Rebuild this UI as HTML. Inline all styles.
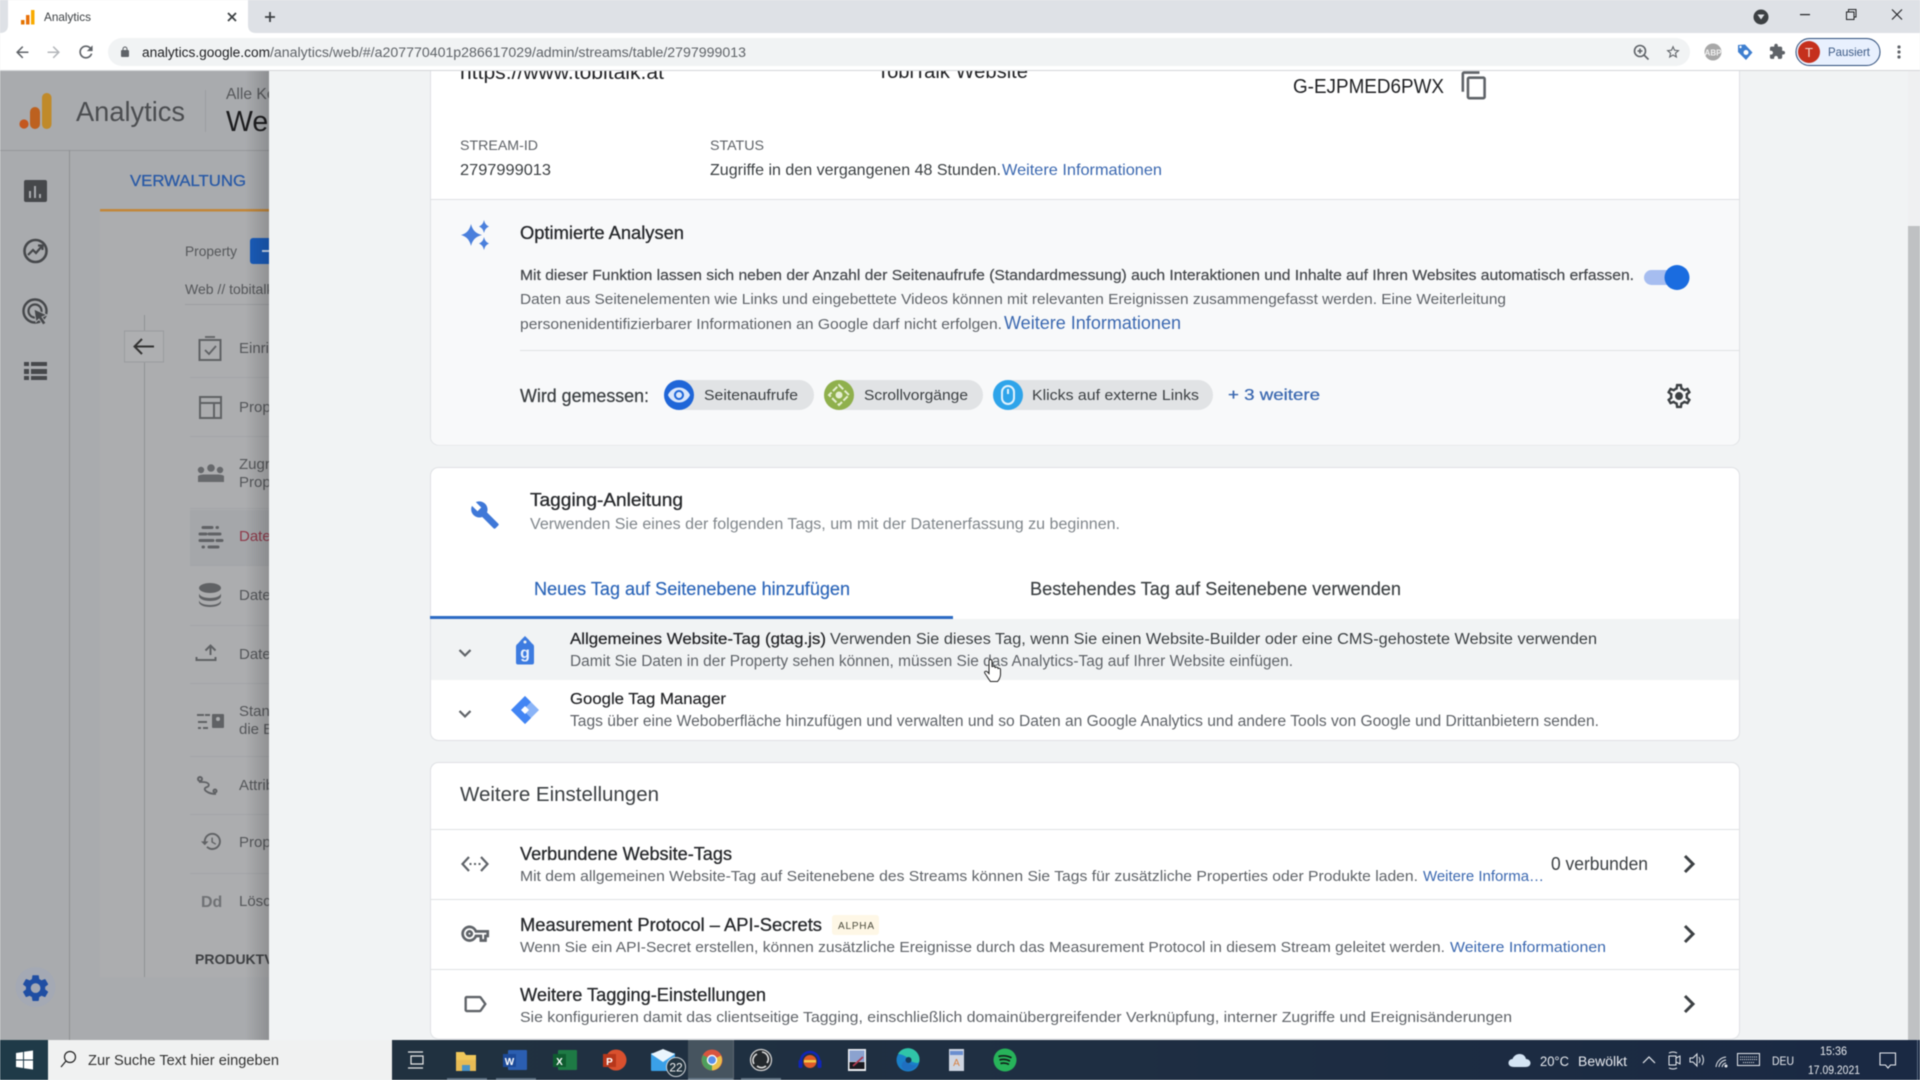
<!DOCTYPE html>
<html lang="de"><head><meta charset="utf-8"><title>Analytics</title>
<style>
html,body{margin:0;padding:0;width:1920px;height:1080px;overflow:hidden;background:#f1f3f4}
svg{display:block;filter:blur(.45px)}
text{font-family:"Liberation Sans",Arial,sans-serif;white-space:pre}
.t{fill:#202124}.g{fill:#5f6368}.b{fill:#3b68b0}
.m{fill:#26282b;stroke:#26282b;stroke-width:.28}
.l{fill:#55575a}
</style></head><body>
<svg width="1920" height="1080" viewBox="0 0 1920 1080" xmlns="http://www.w3.org/2000/svg">
<defs>
<linearGradient id="sh" x1="0" x2="1" y1="0" y2="0"><stop offset="0" stop-color="#000" stop-opacity="0"/><stop offset="1" stop-color="#000" stop-opacity=".16"/></linearGradient>
<linearGradient id="tb" x1="0" x2="1" y1="0" y2="0"><stop offset="0" stop-color="#22333f"/><stop offset=".5" stop-color="#1f2f42"/><stop offset="1" stop-color="#1a2943"/></linearGradient>
<path id="gear" d="M19.14 12.94c.04-.3.06-.61.06-.94 0-.32-.02-.64-.07-.94l2.03-1.58c.18-.14.23-.41.12-.61l-1.92-3.32c-.12-.22-.37-.29-.59-.22l-2.39.96c-.5-.38-1.03-.7-1.62-.94l-.36-2.54c-.04-.24-.24-.41-.48-.41h-3.84c-.24 0-.43.17-.47.41l-.36 2.54c-.59.24-1.13.57-1.62.94l-2.39-.96c-.22-.08-.47 0-.59.22L2.74 8.87c-.12.21-.08.47.12.61l2.03 1.58c-.05.3-.09.63-.09.94s.02.64.07.94l-2.03 1.58c-.18.14-.23.41-.12.61l1.92 3.32c.12.22.37.29.59.22l2.39-.96c.5.38 1.03.7 1.62.94l.36 2.54c.05.24.24.41.48.41h3.84c.24 0 .44-.17.47-.41l.36-2.54c.59-.24 1.13-.56 1.62-.94l2.39.96c.22.08.47 0 .59-.22l1.92-3.32c.12-.22.07-.47-.12-.61l-2.01-1.58zM12 15.6c-1.98 0-3.6-1.62-3.6-3.6s1.62-3.6 3.6-3.6 3.6 1.62 3.6 3.6-1.62 3.6-3.6 3.6z"/>
</defs>

<!-- left scrimmed page -->
<rect x="0" y="70" width="300" height="970" fill="#a9abae"/>
<rect x="100" y="212" width="200" height="765" fill="#acadaf"/>
<rect x="0" y="150" width="300" height="1" fill="#96989b"/>
<rect x="69" y="150" width="1" height="890" fill="#8f9194"/>
<rect x="205" y="90" width="1" height="42" fill="#9c9ea1"/>
<!-- GA logo -->
<circle cx="24" cy="124" r="4.600" fill="#c4581f"/>
<rect x="30" y="107" width="10" height="22" rx="5" fill="#bd611f"/>
<rect x="42" y="93" width="9.500" height="36" rx="4.700" fill="#c08a2a"/>
<text x="76" y="121" font-size="28" fill="#4b4d50" textLength="109" lengthAdjust="spacingAndGlyphs">Analytics</text>
<text x="226" y="99" font-size="16" fill="#55575a" textLength="80" lengthAdjust="spacingAndGlyphs">Alle Konten</text>
<text x="226" y="131" font-size="29" fill="#1c1c1e" textLength="58" lengthAdjust="spacingAndGlyphs">Web</text>
<!-- rail icons -->
<rect x="24" y="180" width="23" height="22" rx="2" fill="#46484b"/>
<rect x="29" y="191" width="2" height="7" fill="#a9abae"/><rect x="34" y="186" width="2" height="12" fill="#a9abae"/><rect x="39" y="194" width="2" height="4" fill="#a9abae"/>
<circle cx="35.500" cy="251" r="11" fill="none" stroke="#46484b" stroke-width="2.600"/>
<path d="M28 255l5-5 3 3 6-7M38 245.500h4.500v4.500" fill="none" stroke="#46484b" stroke-width="2.200"/>
<circle cx="35" cy="311" r="11.500" fill="none" stroke="#46484b" stroke-width="2.400"/>
<circle cx="35" cy="311" r="6.500" fill="none" stroke="#46484b" stroke-width="2.200"/>
<path d="M34 309l13 6-5 2 4 6-3 2-4-6-3 3z" fill="#46484b" stroke="#a9abae"/>
<path d="M24 362h5v4h-5zM31 362h16v4H31zM24 369h5v5h-5zM31 369h16v5H31zM24 376h5v4h-5zM31 376h16v4H31z" fill="#46484b"/>
<circle cx="35.500" cy="987" r="20" fill="#a4a9b4"/>
<use href="#gear" transform="translate(19.500 972) scale(1.340)" fill="#1f4ea3"/>
<!-- verwaltung -->
<text x="130" y="186" font-size="16" fill="#2a5aa6" stroke="#2a5aa6" stroke-width=".3" textLength="116" lengthAdjust="spacingAndGlyphs">VERWALTUNG</text>
<rect x="100" y="209" width="170" height="2.500" fill="#c2873a"/>
<text x="185" y="256" font-size="14" fill="#55575a" textLength="52" lengthAdjust="spacingAndGlyphs">Property</text>
<rect x="250" y="238" width="30" height="26" rx="3" fill="#1a5cba"/>
<rect x="262" y="250" width="8" height="2" fill="#c8d8f0"/>
<text x="185" y="294" font-size="14" fill="#55575a">Web // tobitalk</text>
<rect x="185" y="304" width="90" height="1" fill="#9c9ea1"/>
<!-- back box + line -->
<rect x="144" y="315" width="1" height="662" fill="#8f9194"/>
<rect x="124.500" y="331" width="39" height="31" fill="#aeafb1" stroke="#9a9c9f"/>
<path d="M154 346.500h-19M142 339l-7.500 7.500 7.500 7.500" fill="none" stroke="#333" stroke-width="2"/>
<!-- nav rows -->
<rect x="190" y="510" width="90" height="55" fill="#a5a7aa"/>
<g fill="none" stroke="#606265" stroke-width="2">
<rect x="199.500" y="340" width="21" height="20" />
<path d="M205 337h10M205 350l4 4 7-8" stroke-width="1.800"/>
<rect x="200" y="397" width="21" height="21" /><path d="M200 403h21M214 403v15"/>
<path d="M215 654v-9m-5 4.500 5-5 5 5M201 656v3h19v-3" transform="translate(-4.500 1)" />
<path d="M199 782h3c8 0 8 4 5 5-6 2 1 7 9 7" stroke-width="1.800"/><circle cx="200" cy="779" r="2"/><circle cx="215" cy="791" r="1.500"/>
</g>
<circle cx="201" cy="470" r="3.200" fill="#67696c"/><circle cx="211" cy="468" r="3.800" fill="#67696c"/><circle cx="220" cy="470" r="3.200" fill="#67696c"/>
<path d="M198 476c2-1.500 5-1.500 7-1.500h12c2 0 5 0 7 1.500v6h-26z" fill="#67696c"/>
<g stroke="#606265" stroke-width="3" stroke-linecap="round"><path d="M203 527.500h9M217 527.500h.5M200 534h6M209 534h11M200 540.500h13M217 540.500h5M203 547h.5M209 547h9"/></g>
<ellipse cx="210" cy="588" rx="11" ry="5" fill="#606265"/>
<path d="M199 593c0 3 5 5 11 5s11-2 11-5v3c0 3-5 5-11 5s-11-2-11-5zM199 600c0 3 5 5 11 5s11-2 11-5v2c0 3-5 5-11 5s-11-2-11-5z" fill="#606265"/>
<path d="M197 714h7v2h-7zM205 714h5v2h-5zM198 721h9v2h-9zM198 727h3v2h-3zM203 727h5v2h-5z" fill="#606265"/><rect x="212" y="714" width="12" height="14" rx="1" fill="#606265"/><circle cx="218" cy="719" r="2" fill="#acadaf"/>
<path d="M13 3c-4.970 0-9 4.030-9 9H1l3.890 3.890.07.14L9 12H6c0-3.870 3.130-7 7-7s7 3.130 7 7-3.130 7-7 7c-1.930 0-3.680-.79-4.940-2.060l-1.420 1.420C8.270 19.990 10.510 21 13 21c4.970 0 9-4.030 9-9s-4.030-9-9-9zm-1 5v5l4.280 2.540.72-1.210-3.500-2.080V8H12z" transform="translate(200 830) scale(.95)" fill="#606265"/>
<text x="201" y="907" font-size="16" font-weight="bold" fill="#707275">Dd</text>
<g font-size="15" fill="#55575a">
<text x="239" y="353">Einrichtung</text>
<text x="239" y="412">Property</text>
<text x="239" y="469">Zugriffe</text>
<text x="239" y="487">Property</text>
<text x="239" y="541" fill="#8f3a4a">Datenstreams</text>
<text x="239" y="600">Datenansicht</text>
<text x="239" y="659">Datenimport</text>
<text x="239" y="716">Standard</text>
<text x="239" y="734">die Berichte</text>
<text x="239" y="790">Attribution</text>
<text x="239" y="847">Property</text>
<text x="239" y="906">Löschen</text>
</g>
<text x="195" y="964" font-size="14" font-weight="bold" fill="#3e4043">PRODUKTVERKNÜPFUNG</text>
<g fill="#a3a5a8">
<rect x="190" y="377" width="90" height="1"/><rect x="190" y="436" width="90" height="1"/><rect x="190" y="508" width="90" height="1"/><rect x="190" y="565" width="90" height="1"/><rect x="190" y="625" width="90" height="1"/><rect x="190" y="683" width="90" height="1"/><rect x="190" y="756" width="90" height="1"/><rect x="190" y="814" width="90" height="1"/><rect x="190" y="873" width="90" height="1"/>
</g>
<rect x="245" y="70" width="24" height="970" fill="url(#sh)"/>

<!-- drawer -->
<rect x="269" y="70" width="1651" height="970" fill="#f1f3f4"/>

<!-- card 1 -->
<path d="M430.500 60H1739.500V437a8 8 0 0 1-8 8H438.500a8 8 0 0 1-8-8z" fill="#fff" stroke="#dfe1e4"/>
<path d="M431 200H1739V437a8 8 0 0 1-8 8H439a8 8 0 0 1-8-8z" fill="#f8f9fa"/>
<rect x="431" y="199" width="1308" height="1" fill="#dfe1e4"/>
<text x="460" y="79" font-size="20" fill="#202124" textLength="204" lengthAdjust="spacingAndGlyphs">https://www.tobitalk.at</text>
<text x="877" y="78" font-size="20" fill="#202124" textLength="151" lengthAdjust="spacingAndGlyphs">TobiTalk Website</text>
<text x="1293" y="93" font-size="20" class="t" textLength="151" lengthAdjust="spacingAndGlyphs">G-EJPMED6PWX</text>
<path d="M16 1H4c-1.100 0-2 .9-2 2v14h2V3h12V1zm3 4H8c-1.100 0-2 .9-2 2v14c0 1.100.9 2 2 2h11c1.100 0 2-.9 2-2V7c0-1.100-.9-2-2-2zm0 16H8V7h11v14z" transform="translate(1459 70) scale(1.280)" fill="#5f6368"/>
<text x="460" y="150" font-size="14" class="g" textLength="78" lengthAdjust="spacingAndGlyphs">STREAM-ID</text>
<text x="460" y="175" font-size="16" fill="#3c4043" textLength="91" lengthAdjust="spacingAndGlyphs">2797999013</text>
<text x="710" y="150" font-size="14" class="g" textLength="54" lengthAdjust="spacingAndGlyphs">STATUS</text>
<text x="710" y="175" font-size="16" fill="#3c4043" textLength="291" lengthAdjust="spacingAndGlyphs">Zugriffe in den vergangenen 48 Stunden.</text>
<text x="1002" y="175" font-size="16" class="b" textLength="160" lengthAdjust="spacingAndGlyphs">Weitere Informationen</text>

<!-- optimized -->
<path d="M471 224Q473 233 482 235Q473 237 471 246Q469 237 461 235Q469 233 471 224zM484 220Q485 225 489 226.500Q485 228 484 233Q483 228 479 226.500Q483 225 484 220zM484 237Q485 242 489 243.500Q485 245 484 250Q483 245 479 243.500Q483 242 484 237z" fill="#4a7fdc"/>
<text x="520" y="239" font-size="18" class="m" textLength="164" lengthAdjust="spacingAndGlyphs">Optimierte Analysen</text>
<text x="520" y="280" font-size="15" fill="#46494d" stroke="#46494d" stroke-width=".22" textLength="1114" lengthAdjust="spacingAndGlyphs">Mit dieser Funktion lassen sich neben der Anzahl der Seitenaufrufe (Standardmessung) auch Interaktionen und Inhalte auf Ihren Websites automatisch erfassen.</text>
<text x="520" y="304" font-size="15" class="g" textLength="986" lengthAdjust="spacingAndGlyphs">Daten aus Seitenelementen wie Links und eingebettete Videos können mit relevanten Ereignissen zusammengefasst werden. Eine Weiterleitung</text>
<text x="520" y="329" font-size="15" class="g" textLength="482" lengthAdjust="spacingAndGlyphs">personenidentifizierbarer Informationen an Google darf nicht erfolgen.</text>
<text x="1004" y="329" font-size="18" class="b" textLength="177" lengthAdjust="spacingAndGlyphs">Weitere Informationen</text>
<rect x="1644" y="270" width="40" height="15" rx="7.500" fill="#a6bdf0"/>
<circle cx="1677" cy="277.500" r="12.500" fill="#1a6ce0"/>
<rect x="520" y="350" width="1219" height="1" fill="#e0e2e4"/>
<text x="520" y="402" font-size="18" fill="#3c4043" stroke="#3c4043" stroke-width=".25" textLength="129" lengthAdjust="spacingAndGlyphs">Wird gemessen:</text>
<rect x="664" y="380" width="150" height="30" rx="15" fill="#e1e3e5"/>
<circle cx="679" cy="395" r="15" fill="#1f66d8"/>
<path d="M12 4.500C7 4.500 2.730 7.610 1 12c1.730 4.390 6 7.500 11 7.500s9.270-3.110 11-7.500c-1.730-4.390-6-7.500-11-7.500zM12 17c-2.760 0-5-2.240-5-5s2.240-5 5-5 5 2.240 5 5-2.240 5-5 5zm0-8c-1.660 0-3 1.340-3 3s1.340 3 3 3 3-1.340 3-3-1.340-3-3-3z" transform="translate(667 383)" fill="#dbe7fb"/>
<text x="704" y="400" font-size="14.500" fill="#3c4043" textLength="94" lengthAdjust="spacingAndGlyphs">Seitenaufrufe</text>
<rect x="824" y="380" width="159" height="30" rx="15" fill="#e1e3e5"/>
<circle cx="839" cy="395" r="15" fill="#8fb04c"/>
<path d="M839 385l10 10-10 10-10-10z" fill="none" stroke="#e6efd2" stroke-width="2" stroke-dasharray="6 2"/><circle cx="839" cy="395" r="3.500" fill="#e6efd2"/>
<text x="864" y="400" font-size="14.500" fill="#3c4043" textLength="104" lengthAdjust="spacingAndGlyphs">Scrollvorgänge</text>
<rect x="993" y="380" width="220" height="30" rx="15" fill="#e1e3e5"/>
<circle cx="1008" cy="395" r="15" fill="#2ea4ea"/>
<rect x="1002" y="386" width="12" height="18" rx="6" fill="none" stroke="#e2f3fd" stroke-width="2"/><path d="M1008 389v5" stroke="#e2f3fd" stroke-width="2"/>
<text x="1032" y="400" font-size="14.500" fill="#3c4043" textLength="167" lengthAdjust="spacingAndGlyphs">Klicks auf externe Links</text>
<text x="1228" y="400" font-size="16" fill="#3b68b0" stroke="#3b68b0" stroke-width=".25" textLength="92" lengthAdjust="spacingAndGlyphs">+ 3 weitere</text>
<g transform="translate(1664.500 381.500) scale(1.210)" fill="#3c4043"><path d="M19.430 12.980c.04-.32.07-.64.07-.98 0-.34-.03-.66-.07-.98l2.110-1.650c.19-.15.24-.42.12-.64l-2-3.460c-.09-.16-.26-.25-.44-.25-.06 0-.12.01-.17.03l-2.490 1c-.52-.4-1.080-.73-1.690-.98l-.38-2.650C14.460 2.180 14.250 2 14 2h-4c-.25 0-.46.18-.49.42l-.38 2.650c-.61.25-1.170.59-1.690.98l-2.490-1c-.06-.02-.12-.03-.18-.03-.17 0-.34.09-.43.25l-2 3.460c-.13.22-.07.49.12.64l2.110 1.650c-.04.32-.07.65-.07.98 0 .33.03.66.07.98l-2.110 1.650c-.19.15-.24.42-.12.64l2 3.460c.09.16.26.25.44.25.06 0 .12-.01.17-.03l2.490-1c.52.4 1.080.73 1.690.98l.38 2.650c.03.24.24.42.49.42h4c.25 0 .46-.18.49-.42l.38-2.650c.61-.25 1.170-.59 1.690-.98l2.490 1c.06.02.12.03.18.03.17 0 .34-.09.43-.25l2-3.460c.12-.22.07-.49-.12-.64l-2.110-1.650zm-1.980-1.710c.04.31.05.52.05.73 0 .21-.02.43-.05.73l-.14 1.130.89.7 1.080.84-.7 1.210-1.270-.51-1.040-.42-.9.68c-.43.32-.84.56-1.250.73l-1.060.43-.16 1.130-.2 1.350h-1.400l-.19-1.350-.16-1.130-1.060-.43c-.43-.18-.83-.41-1.230-.71l-.91-.7-1.060.43-1.270.51-.7-1.210 1.080-.84.89-.7-.14-1.130c-.03-.31-.05-.54-.05-.74s.02-.43.05-.73l.14-1.130-.89-.7-1.080-.84.7-1.210 1.270.51 1.040.42.9-.68c.43-.32.84-.56 1.250-.73l1.060-.43.16-1.130.2-1.350h1.390l.19 1.350.16 1.130 1.060.43c.43.18.83.41 1.230.71l.91.7 1.060-.43 1.270-.51.7 1.210-1.070.85-.89.7.14 1.130z"/><circle cx="12" cy="12" r="3.300"/></g>

<!-- tagging card -->
<rect x="430.500" y="467.500" width="1309" height="273" rx="8" fill="#fff" stroke="#dfe1e4"/>
<path d="M22.700 19l-9.100-9.100c.9-2.300.4-5-1.500-6.900-2-2-5-2.400-7.400-1.300L9 6 6 9 1.600 4.700C.4 7.100.9 10.100 2.900 12.100c1.900 1.900 4.600 2.400 6.900 1.500l9.100 9.100c.4.4 1 .4 1.400 0l2.300-2.300c.5-.4.5-1.100.1-1.400z" transform="translate(470 500) scale(1.250)" fill="#3f78d8"/>
<text x="530" y="506" font-size="18" class="m" textLength="153" lengthAdjust="spacingAndGlyphs">Tagging-Anleitung</text>
<text x="530" y="529" font-size="15.500" fill="#80868b" textLength="590" lengthAdjust="spacingAndGlyphs">Verwenden Sie eines der folgenden Tags, um mit der Datenerfassung zu beginnen.</text>
<text x="534" y="595" font-size="18" fill="#2d66b9" stroke="#2d66b9" stroke-width=".2" textLength="316" lengthAdjust="spacingAndGlyphs">Neues Tag auf Seitenebene hinzufügen</text>
<text x="1030" y="595" font-size="18" fill="#3c4043" stroke="#3c4043" stroke-width=".15" textLength="371" lengthAdjust="spacingAndGlyphs">Bestehendes Tag auf Seitenebene verwenden</text>
<rect x="431" y="619" width="1308" height="61" fill="#f1f3f4"/>
<rect x="430" y="616" width="523" height="3" fill="#2d6bc4"/>
<path d="M459.500 650l5.500 5.500 5.500-5.500M459.500 711l5.500 5.500 5.500-5.500" fill="none" stroke="#5f6368" stroke-width="2.200"/>
<path d="M525 636l3.500 3.500 3.500 4c1.500 1 2 2 2 3v16a2 2 0 0 1-2 2h-14a2 2 0 0 1-2-2v-16c0-1 .5-2 2-3l3.500-4z" fill="#3d7be0"/>
<circle cx="525" cy="642" r="1.500" fill="#f1f3f4"/>
<text x="525" y="658" font-size="16" font-weight="bold" fill="#e8f0fd" text-anchor="middle">g</text>
<path d="M525 696l14 14-14 14-14-14z" fill="#8ab4f8"/>
<path d="M511 710l14-14 6 6-8 8 8 8-6 6z" fill="#4285f4"/>
<path d="M521 710l4-4 4 4-4 4z" fill="#fff"/>
<text x="570" y="644" font-size="15.500" class="t" stroke="#202124" stroke-width=".2" textLength="256" lengthAdjust="spacingAndGlyphs">Allgemeines Website-Tag (gtag.js)</text>
<text x="830" y="644" font-size="15.500" fill="#3c4043" textLength="767" lengthAdjust="spacingAndGlyphs">Verwenden Sie dieses Tag, wenn Sie einen Website-Builder oder eine CMS-gehostete Website verwenden</text>
<text x="570" y="666" font-size="15.500" class="g" textLength="723" lengthAdjust="spacingAndGlyphs">Damit Sie Daten in der Property sehen können, müssen Sie das Analytics-Tag auf Ihrer Website einfügen.</text>
<text x="570" y="704" font-size="15.500" class="t" stroke="#202124" stroke-width=".15" textLength="156" lengthAdjust="spacingAndGlyphs">Google Tag Manager</text>
<text x="570" y="726" font-size="15.500" class="g" textLength="1029" lengthAdjust="spacingAndGlyphs">Tags über eine Weboberfläche hinzufügen und verwalten und so Daten an Google Analytics und andere Tools von Google und Drittanbietern senden.</text>
<!-- cursor -->
<path d="M989 661c0-2 3-2 3 0v6c0-1 3-1 3 0v1c0-1 3-1 3 0v1c0-1 2.500-1 2.500.5v5c0 3-2 6-3 7h-7c-1-1-4-6-5.500-8s1-3 2.500-1.500l1.500 1.500z" fill="#fff" stroke="#222" stroke-width="1"/>

<!-- settings card -->
<path d="M430.500 770.500a8 8 0 0 1 8-8h1293a8 8 0 0 1 8 8V1031a8 8 0 0 1-8 8h-1293a8 8 0 0 1-8-8z" fill="#fff" stroke="#dfe1e4"/>
<text x="460" y="801" font-size="20" fill="#3c4043" textLength="199" lengthAdjust="spacingAndGlyphs">Weitere Einstellungen</text>
<rect x="431" y="829" width="1308" height="1" fill="#e0e2e4"/>
<rect x="431" y="899" width="1308" height="1" fill="#e0e2e4"/>
<rect x="431" y="969" width="1308" height="1" fill="#e0e2e4"/>
<path d="M469 857l-6.500 7 6.500 7M481 857l6.500 7-6.500 7" fill="none" stroke="#5f6368" stroke-width="2.200"/>
<path d="M469.500 864h2M474 864h2M478.500 864h2" stroke="#5f6368" stroke-width="2"/>
<path d="M22 19h-6v-4h-2.680c-1.140 2.420-3.600 4-6.320 4-3.860 0-7-3.140-7-7s3.140-7 7-7c2.720 0 5.170 1.580 6.320 4H24v6h-2v4zm-4-2h2v-4h2v-2H11.940l-.23-.67C11.010 8.340 9.110 7 7 7c-2.760 0-5 2.240-5 5s2.240 5 5 5c2.110 0 4.010-1.340 4.710-3.330l.23-.67H18v4zM7 15c-1.650 0-3-1.350-3-3s1.350-3 3-3 3 1.350 3 3-1.350 3-3 3zm0-4c-.55 0-1 .45-1 1s.45 1 1 1 1-.45 1-1-.45-1-1-1z" transform="translate(461.500 920) scale(1.140)" fill="#5f6368" stroke="#5f6368" stroke-width=".4"/>
<path d="M17.630 5.840C17.270 5.330 16.670 5 16 5L5 5.010C3.900 5.010 3 5.900 3 7v10c0 1.100.9 1.990 2 1.990L16 19c.67 0 1.270-.33 1.630-.84L22 12l-4.370-6.160zM16 17H5V7h11l3.550 5L16 17z" transform="translate(461 990) scale(1.170)" fill="#5f6368"/>
<text x="520" y="860" font-size="18" class="m" textLength="212" lengthAdjust="spacingAndGlyphs">Verbundene Website-Tags</text>
<text x="520" y="881" font-size="15" class="g" textLength="898" lengthAdjust="spacingAndGlyphs">Mit dem allgemeinen Website-Tag auf Seitenebene des Streams können Sie Tags für zusätzliche Properties oder Produkte laden.</text>
<text x="1423" y="881" font-size="15" class="b" textLength="121" lengthAdjust="spacingAndGlyphs">Weitere Informa…</text>
<text x="1551" y="870" font-size="18" fill="#3c4043" textLength="97" lengthAdjust="spacingAndGlyphs">0 verbunden</text>
<text x="520" y="931" font-size="18" class="m" textLength="302" lengthAdjust="spacingAndGlyphs">Measurement Protocol – API-Secrets</text>
<rect x="832" y="915" width="47" height="20" rx="3" fill="#fef7e6"/>
<text x="838" y="929" font-size="10" fill="#4a4a3c" textLength="36" lengthAdjust="spacing">ALPHA</text>
<text x="520" y="952" font-size="15" class="g" textLength="925" lengthAdjust="spacingAndGlyphs">Wenn Sie ein API-Secret erstellen, können zusätzliche Ereignisse durch das Measurement Protocol in diesem Stream geleitet werden.</text>
<text x="1450" y="952" font-size="15" class="b" textLength="156" lengthAdjust="spacingAndGlyphs">Weitere Informationen</text>
<text x="520" y="1001" font-size="18" class="m" textLength="246" lengthAdjust="spacingAndGlyphs">Weitere Tagging-Einstellungen</text>
<text x="520" y="1022" font-size="15" class="g" textLength="992" lengthAdjust="spacingAndGlyphs">Sie konfigurieren damit das clientseitige Tagging, einschließlich domainübergreifender Verknüpfung, interner Zugriffe und Ereignisänderungen</text>
<path d="M1685 856l8 8-8 8M1685 926l8 8-8 8M1685 996l8 8-8 8" fill="none" stroke="#3c4043" stroke-width="3"/>

<!-- scrollbar -->
<rect x="1908" y="70" width="12" height="970" fill="#eff0f1"/>
<rect x="1908" y="226" width="12" height="814" fill="#bfc1c3"/>

<!-- browser chrome -->
<rect x="0" y="0" width="1920" height="34" fill="#dee1e6"/>
<path d="M0 33q8 0 8-8V0h240v25q0 8 8 8z" fill="#fff"/>
<rect x="0" y="33" width="1920" height="37" fill="#fff"/>
<rect x="0" y="70" width="1920" height="1" fill="#d4d6d9"/>
<rect x="21" y="20" width="3.500" height="4.500" fill="#e37400"/>
<rect x="26" y="15" width="3.500" height="9.500" fill="#e8710a"/>
<rect x="31" y="10" width="3.500" height="14.500" fill="#f9ab00"/>
<text x="44" y="21" font-size="12" fill="#3c4043" textLength="47" lengthAdjust="spacingAndGlyphs">Analytics</text>
<path d="M228 13l8 8M236 13l-8 8" stroke="#3c4043" stroke-width="1.800"/>
<path d="M270 12v10M265 17h10" stroke="#3c4043" stroke-width="1.800"/>
<path d="M20 11H7.830l5.590-5.590L12 4l-8 8 8 8 1.410-1.410L7.830 13H20v-2z" transform="translate(13 43) scale(.77)" fill="#5f6368"/>
<path d="M4 11h12.170l-5.590-5.590L12 4l8 8-8 8-1.410-1.410L16.170 13H4v-2z" transform="translate(44.500 43) scale(.77)" fill="#b3b6ba"/>
<path d="M17.650 6.350C16.200 4.900 14.210 4 12 4c-4.420 0-7.990 3.580-7.990 8s3.570 8 7.990 8c3.730 0 6.840-2.550 7.730-6h-2.080c-.82 2.330-3.040 4-5.650 4-3.310 0-6-2.690-6-6s2.690-6 6-6c1.660 0 3.140.69 4.220 1.780L13 11h7V4l-2.350 2.350z" transform="translate(76 42) scale(.83)" fill="#5f6368"/>
<rect x="108" y="38" width="1582" height="28" rx="14" fill="#f1f3f4"/>
<path d="M18 8h-1V6c0-2.760-2.240-5-5-5S7 3.240 7 6v2H6c-1.100 0-2 .9-2 2v10c0 1.100.9 2 2 2h12c1.100 0 2-.9 2-2V10c0-1.100-.9-2-2-2zM9 6c0-1.660 1.340-3 3-3s3 1.340 3 3v2H9V6z" transform="translate(119 46) scale(.5)" fill="#5f6368"/>
<text x="142" y="57" font-size="13.500" fill="#202124" textLength="128" lengthAdjust="spacingAndGlyphs">analytics.google.com</text>
<text x="270" y="57" font-size="13.500" fill="#5f6368" textLength="476" lengthAdjust="spacingAndGlyphs">/analytics/web/#/a207770401p286617029/admin/streams/table/2797999013</text>
<circle cx="1640" cy="51" r="5.500" fill="none" stroke="#5f6368" stroke-width="1.600"/><path d="M1644 55l4.500 4.500M1637.500 51h5M1640 48.500v5" stroke="#5f6368" stroke-width="1.600"/>
<path d="M22 9.240l-7.190-.62L12 2 9.190 8.630 2 9.240l5.460 4.730L5.820 21 12 17.270 18.180 21l-1.630-7.030L22 9.240zM12 15.400l-3.760 2.270 1-4.280-3.320-2.880 4.380-.38L12 6.100l1.710 4.040 4.380.38-3.320 2.880 1 4.280L12 15.400z" transform="translate(1665 44) scale(.67)" fill="#5f6368"/>
<circle cx="1713" cy="52" r="8.500" fill="#a8a8a8"/>
<text x="1713" y="55.500" font-size="8" font-weight="bold" fill="#f3f3f3" text-anchor="middle">ABP</text>
<path d="M1738 45l7-.5 7.500 8-6.500 7.500-8-8z" fill="#3f7fd0"/><circle cx="1746" cy="52.500" r="2.500" fill="#fff"/><circle cx="1740.500" cy="47" r="1.200" fill="#fff"/>
<path d="M20.500 11H19V7c0-1.100-.9-2-2-2h-4V3.500C13 2.120 11.880 1 10.500 1S8 2.120 8 3.500V5H4c-1.100 0-1.990.9-1.990 2v3.800H3.500c1.490 0 2.700 1.210 2.700 2.700s-1.210 2.700-2.700 2.700H2V20c0 1.100.9 2 2 2h3.800v-1.500c0-1.490 1.210-2.700 2.700-2.700 1.490 0 2.700 1.210 2.700 2.700V22H17c1.100 0 2-.9 2-2v-4h1.500c1.380 0 2.500-1.120 2.500-2.500S21.880 11 20.500 11z" transform="translate(1768.500 43) scale(.72)" fill="#5f6368"/>
<rect x="1796" y="38.500" width="84" height="27" rx="13.500" fill="#e8f0fe" stroke="#2a4a78"/>
<circle cx="1809" cy="52" r="11" fill="#c5301d"/>
<text x="1809" y="57" font-size="13" fill="#f3d6d0" text-anchor="middle">T</text>
<text x="1828" y="56" font-size="12" fill="#3c5a85" textLength="42" lengthAdjust="spacingAndGlyphs">Pausiert</text>
<circle cx="1899" cy="47" r="1.600" fill="#5f6368"/><circle cx="1899" cy="52" r="1.600" fill="#5f6368"/><circle cx="1899" cy="57" r="1.600" fill="#5f6368"/>
<circle cx="1761" cy="17" r="7.500" fill="#3c4043"/><path d="M1757.500 14.500h7l-3.500 5z" fill="#dee1e6"/>
<rect x="1800" y="14" width="10" height="1.200" fill="#202124"/>
<rect x="1846.500" y="12" width="7.500" height="7.500" fill="#dee1e6" stroke="#202124"/><path d="M1848.500 12v-2.500h7.500v7.500h-2" fill="none" stroke="#202124"/>
<path d="M1892 9.500l10 10M1902 9.500l-10 10" stroke="#202124" stroke-width="1.100"/>

<!-- taskbar -->
<rect x="0" y="1040" width="1920" height="40" fill="url(#tb)"/>
<rect x="0" y="1040" width="48" height="40" fill="#1f3a48"/>
<path d="M16 1053l7-1v7.500h-7zM24 1051.800l9-1.300v9h-9zM16 1060.500h7v7.500l-7-1zM24 1060.500h9v9l-9-1.300z" fill="#fff"/>
<rect x="48" y="1040" width="344" height="40" fill="#f0f1f1"/>
<circle cx="70" cy="1057" r="5.500" fill="none" stroke="#222" stroke-width="1.200"/><path d="M66 1061l-5 6" stroke="#222" stroke-width="1.200"/>
<text x="88" y="1065" font-size="14.500" fill="#333" textLength="191" lengthAdjust="spacingAndGlyphs">Zur Suche Text hier eingeben</text>
<!-- taskbar icons -->
<rect x="688" y="1040" width="45" height="40" fill="#46545f"/>
<rect x="733" y="1040" width="1" height="40" fill="#5a6670"/>
<path d="M408 1052h15M408 1068h15M411 1056h12v8h-12z" fill="none" stroke="#e8e8e8" stroke-width="1.200"/>
<path d="M456 1052h8l2 3h10v16h-20z" fill="#f0c75a"/><rect x="456" y="1060" width="20" height="11" fill="#e8bb55"/><rect x="462" y="1065" width="8" height="6" fill="#4a93c8"/>
<rect x="508" y="1050" width="19" height="20" rx="1" fill="#2b5eb0"/><rect x="503" y="1054" width="13" height="13" fill="#1c4a99"/><text x="509.500" y="1065" font-size="10" font-weight="bold" fill="#fff" text-anchor="middle">W</text>
<rect x="558" y="1050" width="19" height="20" rx="1" fill="#1e7a45"/><rect x="553" y="1054" width="13" height="13" fill="#0f5c30"/><text x="559.500" y="1065" font-size="10" font-weight="bold" fill="#fff" text-anchor="middle">X</text>
<circle cx="616" cy="1060" r="10.500" fill="#d9502e"/><rect x="603" y="1054" width="13" height="13" fill="#b7371b"/><text x="609.500" y="1065" font-size="10" font-weight="bold" fill="#fff" text-anchor="middle">P</text>
<rect x="651" y="1053" width="24" height="18" rx="1" fill="#3aa0e8"/><path d="M651 1054l12-5 12 5-12 8z" fill="#eaf5fd"/>
<circle cx="676" cy="1067" r="9.500" fill="#22333f" stroke="#d0d4d8"/><text x="676" y="1071.500" font-size="12" fill="#f4f4f4" text-anchor="middle">22</text>
<circle cx="712" cy="1060" r="10.500" fill="#d9553f"/>
<path d="M712 1060L721 1055.500A10.500 10.500 0 0 1 712 1070.500z" fill="#e9c04a"/><path d="M712 1060V1070.500A10.500 10.500 0 0 1 703 1055z" fill="#4f9e5c"/>
<circle cx="712" cy="1060" r="5.200" fill="#fff"/><circle cx="712" cy="1060" r="3.900" fill="#5a8fe8"/>
<circle cx="761" cy="1060" r="10.500" fill="#23282c" stroke="#d8d8d8" stroke-width="1.200"/><path d="M762 1052a7 7 0 0 1 5 11M754 1064a7 7 0 0 1 3-10M766 1066a7 7 0 0 1-9 0" fill="none" stroke="#ddd" stroke-width="1.600"/>
<path d="M801 1066v-5a9 9 0 0 1 18 0v5" fill="none" stroke="#1226b8" stroke-width="2.500"/><rect x="798.500" y="1060" width="4" height="8" rx="1.500" fill="#1226b8"/><rect x="817.500" y="1060" width="4" height="8" rx="1.500" fill="#1226b8"/>
<circle cx="810" cy="1061.500" r="6.500" fill="#e05a28"/><rect x="804" y="1060" width="12" height="2.500" fill="#f0c848"/>
<rect x="848" y="1049" width="18" height="22" fill="#eef0f4"/><rect x="849.500" y="1050.500" width="15" height="11" fill="#8ba2cf"/><rect x="849.500" y="1062" width="15" height="7" fill="#1a1a20"/><path d="M853 1066l10-9" stroke="#b03a50" stroke-width="1.800"/>
<circle cx="908" cy="1060" r="11.500" fill="#1a7fc8"/><path d="M898 1054a11.500 11.500 0 0 1 21.500 6c0 1.500-.5 2-1.500 3-3 0-7-1-9-4-2-2-7-5-11-5z" fill="#30c4a8"/><path d="M907 1061c1 3 5 5 10 4-3 4-8 6-12 5-3-1-4-4-3-6 1-3 4-4 5-3z" fill="#1f6fc0"/><circle cx="908.500" cy="1060" r="3" fill="#143a5a"/>
<rect x="949" y="1049" width="15" height="22" fill="#cfd6e2"/><rect x="950" y="1051" width="13" height="4" fill="#6a8fd0"/><text x="956.500" y="1066" font-size="10" fill="#d88040" text-anchor="middle">A</text>
<circle cx="1005" cy="1060" r="11.500" fill="#27b35a"/><path d="M998.500 1056.500c4.500-1.200 9-.8 13 1.300M999.500 1060c3.500-1 7.500-.6 10.500 1.100M1000.500 1063.500c3-.8 6-.4 8.500.9" fill="none" stroke="#11201a" stroke-width="1.700"/>
<g fill="#6c7f90" opacity=".8"><rect x="447" y="1078" width="40" height="2"/><rect x="496" y="1078" width="40" height="2"/><rect x="688" y="1078" width="45" height="2"/><rect x="741" y="1078" width="40" height="2"/></g>
<!-- tray -->
<path d="M1514 1067c-4 0-5.500-2-5.500-4 0-2.500 2-4 4-4 1-3 4-5 7-5 3.500 0 6 2 6.500 5 2.500 0 4.500 2 4.500 4 0 2.500-2 4-5 4z" fill="#d4e4f4"/>
<text x="1540" y="1066" font-size="13.500" fill="#e6e9ee" textLength="29" lengthAdjust="spacingAndGlyphs">20°C</text>
<text x="1578" y="1066" font-size="13.500" fill="#e6e9ee" textLength="49" lengthAdjust="spacingAndGlyphs">Bewölkt</text>
<path d="M1643 1063l6-6 6 6" fill="none" stroke="#e6e9ee" stroke-width="1.200"/>
<rect x="1669" y="1056" width="7" height="9" fill="none" stroke="#e6e9ee"/><path d="M1676 1058l4-2v8l-4-2zM1669 1053q4-2 8 0M1669 1068q4 2 8 0" fill="none" stroke="#e6e9ee"/>
<path d="M1690 1058h3l4-4v12l-4-4h-3z" fill="none" stroke="#e6e9ee"/><path d="M1699 1057q2 3 0 6M1702 1055q3 5 0 10" fill="none" stroke="#e6e9ee"/>
<path d="M1716 1067a11 11 0 0 1 10-10M1719 1067a8 8 0 0 1 7-7M1722 1067a5 5 0 0 1 4-4" fill="none" stroke="#e6e9ee"/><circle cx="1726" cy="1066" r="1.500" fill="#e6e9ee"/>
<rect x="1737.500" y="1053.500" width="22" height="12" fill="none" stroke="#e6e9ee"/><path d="M1740 1057h17M1740 1059.500h17M1743 1062.500h11" stroke="#e6e9ee" stroke-dasharray="1 1"/>
<text x="1772" y="1065" font-size="12" fill="#e6e9ee" textLength="22" lengthAdjust="spacingAndGlyphs">DEU</text>
<text x="1820" y="1055" font-size="12" fill="#e6e9ee" textLength="27" lengthAdjust="spacingAndGlyphs">15:36</text>
<text x="1808" y="1074" font-size="12" fill="#e6e9ee" textLength="52" lengthAdjust="spacingAndGlyphs">17.09.2021</text>
<path d="M1880 1053h15.500v12h-5l-2.500 3-2.500-3h-5.500z" fill="none" stroke="#e6e9ee" stroke-width="1.100"/>
<rect x="1917" y="1040" width="1" height="40" fill="#5a6a80"/>
</svg>
</body></html>
